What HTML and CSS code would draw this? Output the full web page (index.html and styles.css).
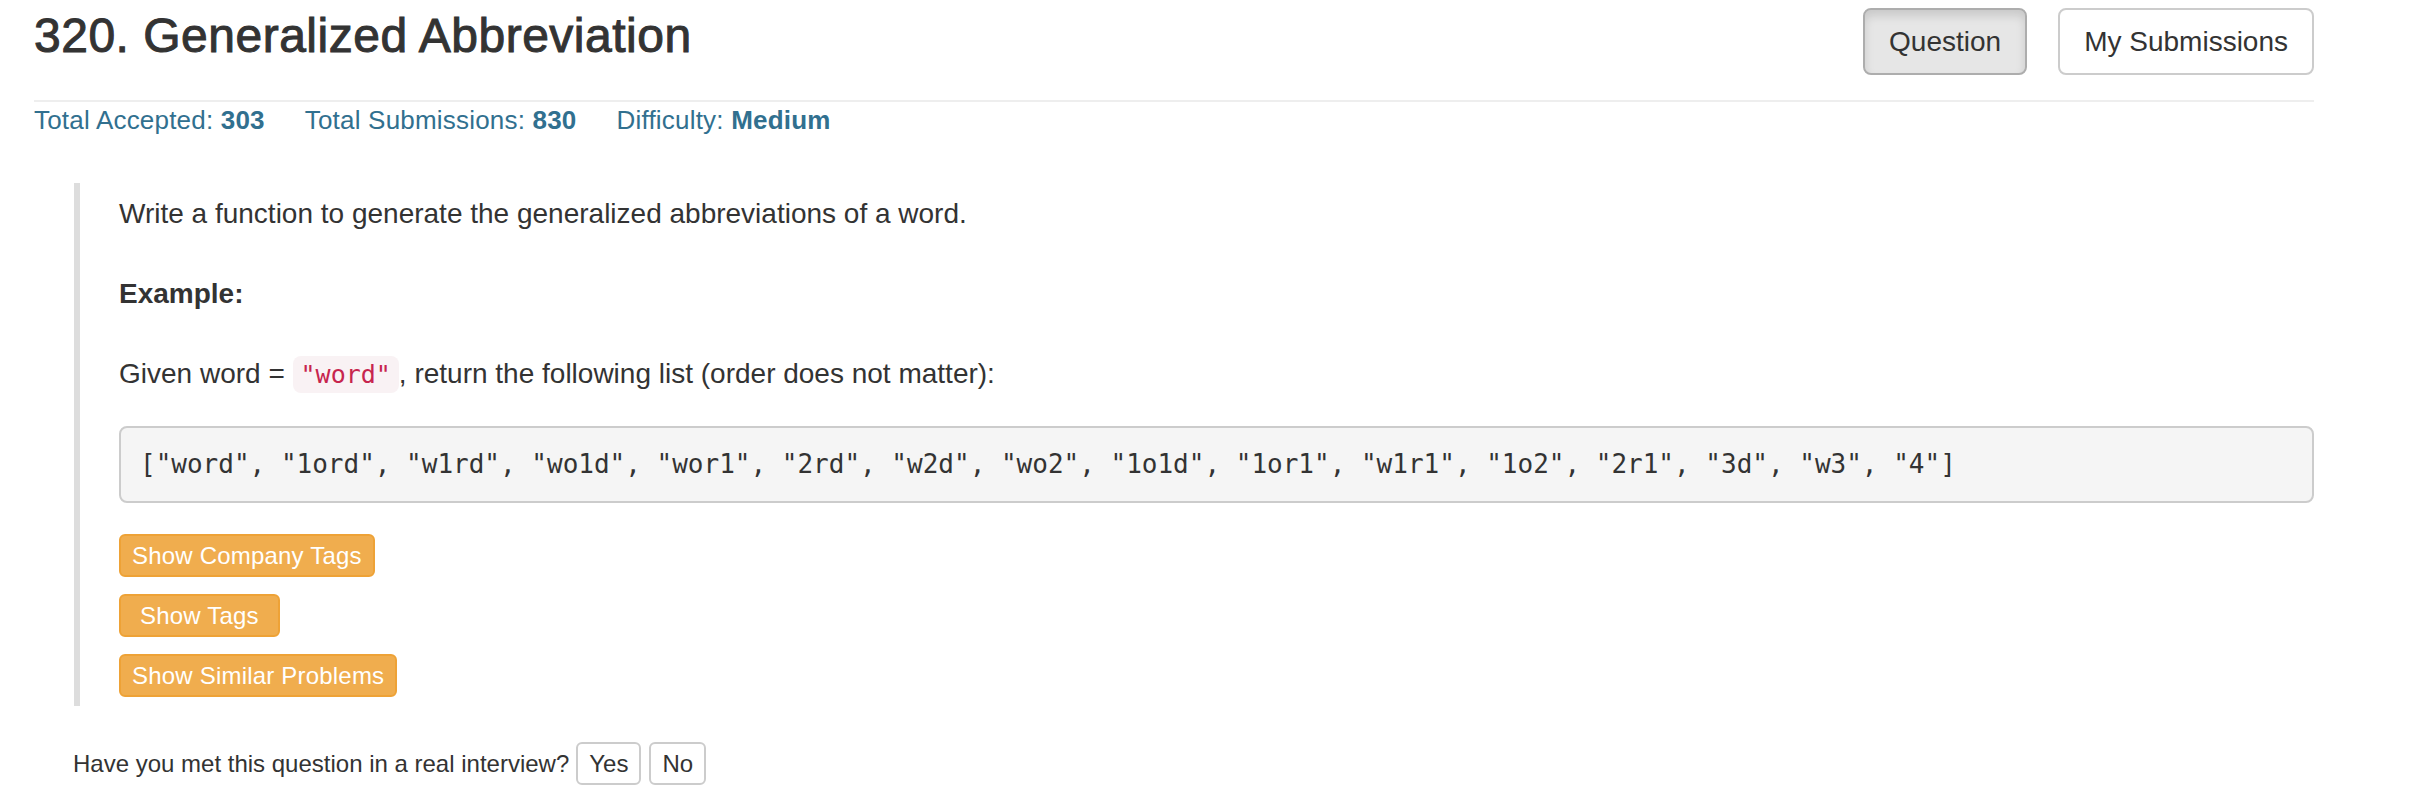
FILE: index.html
```html
<!DOCTYPE html>
<html lang="en">
<head>
<meta charset="utf-8">
<title>320. Generalized Abbreviation</title>
<link rel="stylesheet" href="styles.css">
</head>
<body>
<div class="page">
  <div class="header">
    <h3 class="title">320. Generalized Abbreviation</h3>
    <div class="tabs">
      <button class="btn btn-active">Question</button>
      <button class="btn">My Submissions</button>
    </div>
  </div>
  <div class="rule"></div>
  <div class="stats">
    <span>Total Accepted: <strong>303</strong></span>
    <span>Total Submissions: <strong>830</strong></span>
    <span>Difficulty: <strong>Medium</strong></span>
  </div>
  <div class="problem">
    <p>Write a function to generate the generalized abbreviations of a word.</p>
    <p><strong>Example:</strong></p>
    <p class="last-p">Given word = <code>"word"</code>, return the following list (order does not matter):</p>
    <pre>["word", "1ord", "w1rd", "wo1d", "wor1", "2rd", "w2d", "wo2", "1o1d", "1or1", "w1r1", "1o2", "2r1", "3d", "w3", "4"]</pre>
    <div class="tag-buttons">
      <button class="tag-btn">Show Company Tags</button>
      <button class="tag-btn tag-btn-wide">Show Tags</button>
      <button class="tag-btn">Show Similar Problems</button>
    </div>
  </div>
  <div class="interview">
    <span>Have you met this question in a real interview?</span>
    <div class="answers">
      <button class="btn-xs">Yes</button>
      <button class="btn-xs">No</button>
    </div>
  </div>
</div>
</body>
</html>
```

FILE: styles.css
```css
html, body {
  margin: 0;
  padding: 0;
  background: #ffffff;
}

body {
  font-family: "Liberation Sans", Arial, Helvetica, sans-serif;
  color: #333333;
  font-size: 28px;
  line-height: 40px;
}

.page {
  width: 2280px;
  padding-left: 34px;
}

.header {
  display: flex;
  justify-content: space-between;
  align-items: flex-start;
  height: 100px;
}

.title {
  margin: 9px 0 0 0;
  font-size: 48px;
  line-height: 53px;
  font-weight: normal;
  letter-spacing: 0.5px;
  -webkit-text-stroke: 1px #333333;
  color: #333333;
}

.tabs {
  display: flex;
  gap: 31px;
  margin-top: 8px;
}

.btn {
  font-family: inherit;
  font-size: 28px;
  line-height: 39px;
  padding: 12px 24px;
  border: 2px solid #cccccc;
  border-radius: 8px;
  background: #ffffff;
  color: #333333;
  cursor: pointer;
}

.btn-active {
  background: #e6e6e6;
  border-color: #adadad;
  box-shadow: inset 0 6px 10px rgba(0, 0, 0, 0.125);
}

.rule {
  height: 2px;
  background: #eeeeee;
}

.stats {
  display: flex;
  gap: 40px;
  font-size: 26px;
  line-height: 36px;
  letter-spacing: 0.2px;
  color: #31708f;
}

.stats strong {
  font-weight: bold;
}

.problem {
  margin: 45px 0 0 40px;
  border-left: 6px solid #dddddd;
  padding: 11px 0 9px 39px;
}

.problem p {
  margin: 0 0 40px 0;
  line-height: 40px;
}

.problem p.last-p {
  margin-bottom: 31px;
}

code {
  font-family: "DejaVu Sans Mono", "Liberation Mono", monospace;
  font-size: 25px;
  padding: 4px 8px;
  color: #c7254e;
  background: #f9f2f4;
  border-radius: 8px;
}

pre {
  margin: 0 0 31px 0;
  padding: 19px;
  background: #f5f5f5;
  border: 2px solid #cccccc;
  border-radius: 8px;
  font-family: "DejaVu Sans Mono", "Liberation Mono", monospace;
  font-size: 26px;
  line-height: 35px;
  color: #333333;
}

.tag-buttons {
  display: flex;
  flex-direction: column;
  align-items: flex-start;
  gap: 17px;
}

.tag-btn {
  font-family: inherit;
  font-size: 24px;
  line-height: 35px;
  padding: 2px 11px;
  border: 2px solid #eea236;
  border-radius: 6px;
  background: #f0ad4e;
  color: #ffffff;
  letter-spacing: 0.2px;
  cursor: pointer;
}

.tag-btn-wide {
  padding: 2px 19px;
}

.interview {
  display: flex;
  align-items: center;
  gap: 7px;
  margin: 36px 0 0 39px;
  font-size: 24px;
  line-height: 35px;
}

.answers {
  display: flex;
  gap: 8px;
}

.btn-xs {
  font-family: inherit;
  font-size: 24px;
  line-height: 35px;
  padding: 2px 11px;
  border: 2px solid #cccccc;
  border-radius: 6px;
  background: #ffffff;
  color: #333333;
  cursor: pointer;
}
```
